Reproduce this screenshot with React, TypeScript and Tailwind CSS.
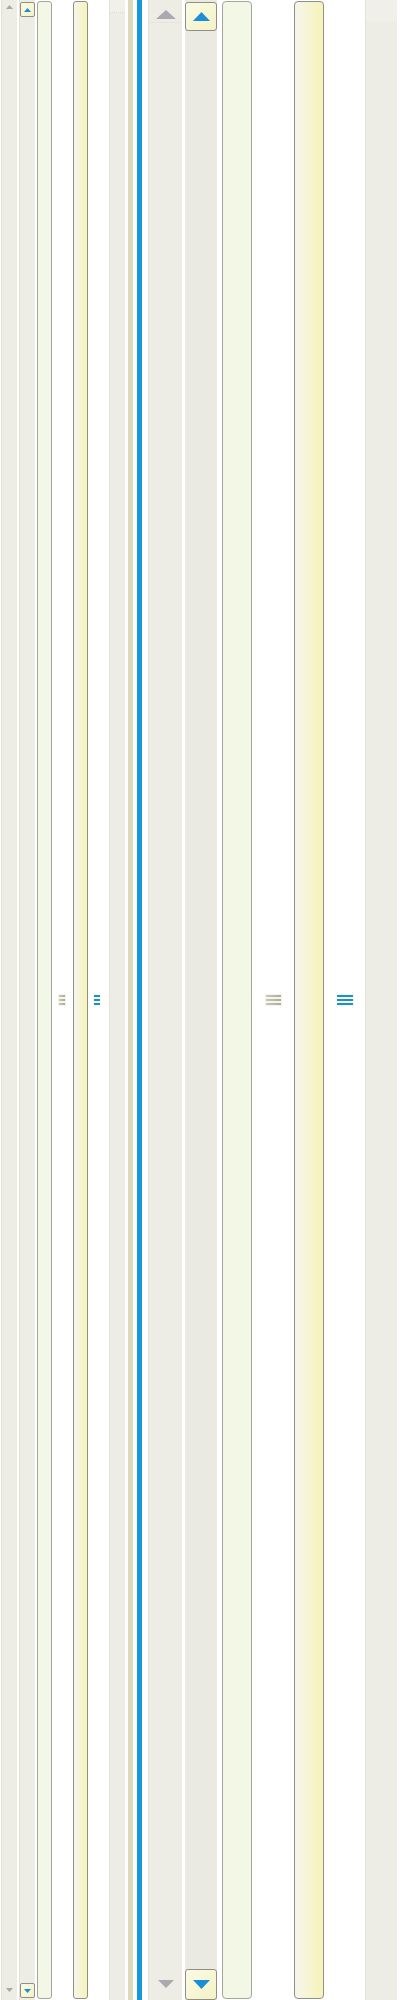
const Up = ({ w, h, color }: { w: number; h: number; color: string }) => (
  <svg width={w} height={h} viewBox={`0 0 ${w} ${h}`}>
    <polygon points={`0,${h} ${w / 2},0 ${w},${h}`} fill={color} />
  </svg>
)

const Down = ({ w, h, color }: { w: number; h: number; color: string }) => (
  <svg width={w} height={h} viewBox={`0 0 ${w} ${h}`}>
    <polygon points={`0,0 ${w},0 ${w / 2},${h}`} fill={color} />
  </svg>
)

const Grip = ({ w, blue }: { w: number; blue?: boolean }) => (
  <div className="flex flex-col gap-[2px] bg-[#f8f7e2] px-[1px] py-[1px]" style={{ width: w }}>
    <div className={blue ? "h-[2px] bg-[#1b8fd6]" : "h-[2px] bg-gradient-to-r from-[#c9c8c4] to-[#a9a8a4]"} />
    <div className={blue ? "h-[2px] bg-[#1b8fd6]" : "h-[2px] bg-gradient-to-r from-[#c9c8c4] to-[#a9a8a4]"} />
    <div className={blue ? "h-[2px] bg-[#1b8fd6]" : "h-[2px] bg-gradient-to-r from-[#c9c8c4] to-[#a9a8a4]"} />
  </div>
)

export default function App() {
  return (
    <div className="flex h-[2000px] w-[400px] bg-white">
      {/* small gray track */}
      <div className="ml-[1px] flex w-[16px] flex-col justify-between border-l border-[#e4e0d2] bg-[#eeede5] py-[5px]">
        <div className="flex justify-center">
          <Up w={7} h={4} color="#a9a8a6" />
        </div>
        <div className="flex justify-center pb-[3px]">
          <Down w={7} h={4} color="#a9a8a6" />
        </div>
      </div>

      {/* small track with buttons */}
      <div className="ml-[2px] flex w-[16px] flex-col justify-between border-l border-[#e4e0d2] bg-[#eeede5] py-[2px]">
        <div className="flex h-[15px] w-[15px] items-center justify-center rounded-[2px] border border-[#8e8f8a] bg-gradient-to-br from-[#fbfbe6] to-[#f4f2c4]">
          <Up w={7} h={4} color="#1b8fd6" />
        </div>
        <div className="flex h-[15px] w-[15px] items-center justify-center rounded-[2px] border border-[#8e8f8a] bg-gradient-to-br from-[#fbfbe6] to-[#f4f2c4]">
          <Down w={7} h={4} color="#1b8fd6" />
        </div>
      </div>

      {/* small green thumb */}
      <div className="my-[1px] ml-[2px] w-[15px] rounded-[3px] border border-[#a3a49e] bg-[#f3f7e6]" />

      <div className="flex w-[21px] items-center justify-center">
        <div className="mr-[2px]">
          <Grip w={8} />
        </div>
      </div>

      {/* small yellow thumb */}
      <div className="my-[1px] w-[15px] rounded-[3px] border border-[#8e8f8a] bg-gradient-to-r from-[#f6f5ec] to-[#f7f3b8]" />

      <div className="flex w-[21px] items-center justify-center">
        <div className="mr-[3px]">
          <Grip w={8} blue />
        </div>
      </div>

      {/* small gray track 2 */}
      <div className="flex w-[16px] flex-col border-l border-[#e4e0d2] bg-[#eeede5]">
        <div className="h-[13px] border-b border-dotted border-[#dddbd0] bg-[#f1f0ea]" />
      </div>

      <div className="ml-[3px] w-[5px] bg-[#dcd9bd]" />
      <div className="ml-[4px] w-[5px] bg-[#1b96dc]" />

      {/* big gray track */}
      <div className="ml-[6px] flex w-[34px] flex-col justify-between border-l border-[#e4e0d2] bg-[#eeede5]">
        <div className="flex h-[23px] items-end justify-center border-b border-[#e6e4dc] pb-[3px]">
          <Up w={20} h={9} color="#aaa9b0" />
        </div>
        <div className="flex h-[22px] items-start justify-center pt-[2px] pb-[10px]">
          <Down w={16} h={8} color="#aaa9b0" />
        </div>
      </div>

      {/* big track with buttons */}
      <div className="ml-[3px] flex w-[32px] flex-col justify-between bg-[#ebeae2] pt-[2px]">
        <div className="flex h-[29px] w-[32px] items-center justify-center rounded-[3px] border border-[#8e8f8a] bg-gradient-to-br from-[#fbfbe6] to-[#f4f2c4]">
          <Up w={17} h={9} color="#1b8fd6" />
        </div>
        <div className="flex h-[31px] w-[32px] items-center justify-center rounded-[3px] border border-[#8e8f8a] bg-gradient-to-br from-[#fbfbe6] to-[#f4f2c4]">
          <Down w={17} h={9} color="#1b8fd6" />
        </div>
      </div>

      {/* big green thumb */}
      <div className="my-[1px] ml-[5px] w-[30px] rounded-[4px] border border-[#a3a49e] bg-[#f3f7e6]" />

      <div className="flex w-[42px] items-center justify-center">
        <Grip w={17} />
      </div>

      {/* big yellow thumb */}
      <div className="my-[1px] w-[30px] rounded-[4px] border border-[#8e8f8a] bg-gradient-to-r from-[#f6f5ec] to-[#f7f3b8]" />

      <div className="flex w-[41px] items-center justify-center">
        <div className="ml-[1px]">
          <Grip w={18} blue />
        </div>
      </div>

      {/* big gray track 2 */}
      <div className="flex w-[32px] flex-col border-l border-[#e4e0d2] bg-[#eeede5]">
        <div className="h-[21px] bg-[#f0efe9]" />
      </div>
    </div>
  )
}
